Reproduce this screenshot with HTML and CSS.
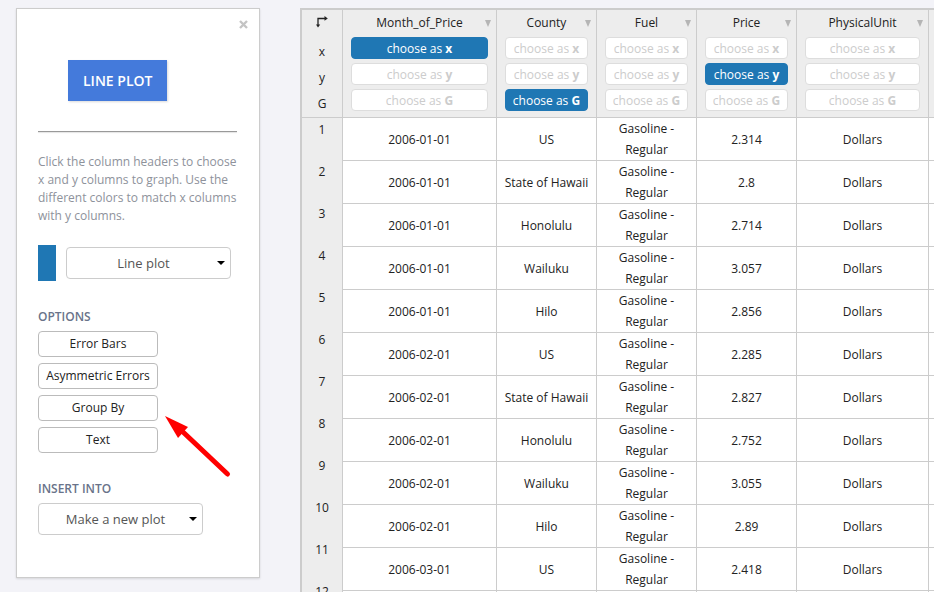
FILE: index.html
```html
<!DOCTYPE html>
<html lang="en">
<head>
<meta charset="utf-8">
<title>Line plot</title>
<link rel="stylesheet" href="styles.css">
</head>
<body>
<main class="workspace">
  <aside class="panel">
    <button class="close" type="button" aria-label="Close">
      <svg width="9" height="9" viewBox="0 0 9 9"><path d="M1 1 8 8M8 1 1 8" fill="none" stroke="currentColor" stroke-width="2.400"/></svg>
    </button>
    <button class="plot-button" type="button">LINE PLOT</button>
    <hr class="divider">
    <p class="hint">Click the column headers to choose x and y columns to graph. Use the different colors to match x columns with y columns.</p>
    <div class="trace">
      <span class="swatch"></span>
      <span class="picker"><select aria-label="Plot type"><option>Line plot</option></select></span>
    </div>
    <section class="group">
      <h2 class="heading">OPTIONS</h2>
      <div class="options">
        <button class="option" type="button">Error Bars</button>
        <button class="option" type="button">Asymmetric Errors</button>
        <button class="option" type="button">Group By</button>
        <button class="option" type="button">Text</button>
        <svg class="arrow" width="68" height="64" viewBox="0 0 68 64" aria-hidden="true"><path d="M18 16 62.500 58" stroke="#f00" stroke-width="5" stroke-linecap="round"/><path d="M0 0 23 11 13 22Z" fill="#f00"/></svg>
      </div>
    </section>
    <section class="group">
      <h2 class="heading"><label for="target">INSERT INTO</label></h2>
      <span class="picker"><select id="target"><option>Make a new plot</option></select></span>
    </section>
  </aside>

  <div class="sheet">
    <div class="gutter">
      <div class="axes">
        <svg class="corner" width="12" height="12" viewBox="0 0 12 12" aria-hidden="true"><path d="M2 9V2.500H9" fill="none" stroke="#222" stroke-width="1.300"/><path d="M0 8.500H4.200L2 11.500ZM8.500 0 11.800 2.500 8.500 4.800Z" fill="#222"/></svg>
        <span>x</span><span>y</span><span>G</span>
      </div>
      <ol class="numbers">
        <li>1</li><li>2</li><li>3</li><li>4</li><li>5</li><li>6</li><li>7</li><li>8</li><li>9</li><li>10</li><li>11</li><li>12</li>
      </ol>
    </div>
    <table class="grid">
      <colgroup><col class="c-date"><col class="c-data"><col class="c-data"><col class="c-data"><col class="c-unit"><col></colgroup>
      <thead>
        <tr>
          <th><div class="title">Month_of_Price<i class="caret"></i></div><div class="choices"><button class="choice on" type="button">choose as <b>x</b></button><button class="choice" type="button">choose as <b>y</b></button><button class="choice" type="button">choose as <b>G</b></button></div></th>
          <th><div class="title">County<i class="caret"></i></div><div class="choices"><button class="choice" type="button">choose as <b>x</b></button><button class="choice" type="button">choose as <b>y</b></button><button class="choice on" type="button">choose as <b>G</b></button></div></th>
          <th><div class="title">Fuel<i class="caret"></i></div><div class="choices"><button class="choice" type="button">choose as <b>x</b></button><button class="choice" type="button">choose as <b>y</b></button><button class="choice" type="button">choose as <b>G</b></button></div></th>
          <th><div class="title">Price<i class="caret"></i></div><div class="choices"><button class="choice" type="button">choose as <b>x</b></button><button class="choice on" type="button">choose as <b>y</b></button><button class="choice" type="button">choose as <b>G</b></button></div></th>
          <th><div class="title">PhysicalUnit<i class="caret"></i></div><div class="choices"><button class="choice" type="button">choose as <b>x</b></button><button class="choice" type="button">choose as <b>y</b></button><button class="choice" type="button">choose as <b>G</b></button></div></th>
          <td class="spare"></td>
        </tr>
      </thead>
      <tbody>
        <tr><td>2006-01-01</td><td>US</td><td>Gasoline - Regular</td><td>2.314</td><td>Dollars</td><td></td></tr>
        <tr><td>2006-01-01</td><td>State of Hawaii</td><td>Gasoline - Regular</td><td>2.8</td><td>Dollars</td><td></td></tr>
        <tr><td>2006-01-01</td><td>Honolulu</td><td>Gasoline - Regular</td><td>2.714</td><td>Dollars</td><td></td></tr>
        <tr><td>2006-01-01</td><td>Wailuku</td><td>Gasoline - Regular</td><td>3.057</td><td>Dollars</td><td></td></tr>
        <tr><td>2006-01-01</td><td>Hilo</td><td>Gasoline - Regular</td><td>2.856</td><td>Dollars</td><td></td></tr>
        <tr><td>2006-02-01</td><td>US</td><td>Gasoline - Regular</td><td>2.285</td><td>Dollars</td><td></td></tr>
        <tr><td>2006-02-01</td><td>State of Hawaii</td><td>Gasoline - Regular</td><td>2.827</td><td>Dollars</td><td></td></tr>
        <tr><td>2006-02-01</td><td>Honolulu</td><td>Gasoline - Regular</td><td>2.752</td><td>Dollars</td><td></td></tr>
        <tr><td>2006-02-01</td><td>Wailuku</td><td>Gasoline - Regular</td><td>3.055</td><td>Dollars</td><td></td></tr>
        <tr><td>2006-02-01</td><td>Hilo</td><td>Gasoline - Regular</td><td>2.89</td><td>Dollars</td><td></td></tr>
        <tr><td>2006-03-01</td><td>US</td><td>Gasoline - Regular</td><td>2.418</td><td>Dollars</td><td></td></tr>
        <tr><td></td><td></td><td></td><td></td><td></td><td></td></tr>
      </tbody>
    </table>
  </div>
</main>
</body>
</html>
```
FILE: styles.css
```css
* {
  box-sizing: border-box;
}

body {
  margin: 0;
  height: 100vh;
  overflow: hidden;
  background: #f3f3f8;
  color: #222;
  font: 12px/21px "Open Sans", sans-serif;
}

button,
select {
  margin: 0;
  padding: 0;
  font: inherit;
  color: inherit;
}

.workspace {
  display: flex;
  align-items: flex-start;
  gap: 40px;
  padding: 8px 0 0 16px;
}

/* Side panel */
.panel {
  position: relative;
  flex: 0 0 244px;
  padding: 51px 21px 42px;
  background: #fff;
  border: 1px solid #ccc;
  box-shadow: 0 1px 2px rgba(0, 0, 0, 0.12);
}

.close {
  position: absolute;
  top: 11px;
  right: 11px;
  display: flex;
  border: 0;
  background: none;
  color: #c4c4c4;
}

.plot-button {
  display: block;
  height: 41px;
  margin-left: 30px;
  padding: 0 15px;
  border: 0;
  background: #447adb;
  box-shadow: 1px 1px 2px rgba(0, 0, 0, 0.15);
  color: #fff;
  font-size: 14px;
  font-weight: 600;
}

.divider {
  height: 1px;
  margin: 30px 1px 21px 0;
  border: 0;
  background: #999;
  box-shadow: 0 1px 1px rgba(0, 0, 0, 0.12);
}

.hint {
  margin: 0 0 20px;
  color: #8e929b;
  line-height: 18px;
}

.trace {
  display: flex;
  align-items: center;
  gap: 10px;
}

.swatch {
  width: 18px;
  height: 36px;
  background: #1f77b4;
}

.picker {
  position: relative;
  display: block;
  width: 165px;
}

.picker select {
  display: block;
  width: 100%;
  height: 32px;
  padding-right: 10px;
  appearance: none;
  border: 1px solid #ccc;
  border-radius: 4px;
  background: #fff;
  color: #555;
  font-size: 13px;
  text-align-last: center;
}

.picker::after {
  content: "";
  position: absolute;
  top: 14px;
  right: 6px;
  border: 4px solid transparent;
  border-top-color: #000;
  border-bottom: 0;
}

.group {
  margin-top: 25px;
}

.heading {
  margin: 0 0 4px;
  color: #69738a;
  font-size: 12px;
  font-weight: 600;
  line-height: 21px;
}

.options {
  position: relative;
  display: flex;
  flex-direction: column;
  gap: 6px;
  width: 120px;
}

.option {
  height: 26px;
  padding-bottom: 2px;
  border: 1px solid #bbb;
  border-radius: 4px;
  background: #fff;
  white-space: nowrap;
}

.arrow {
  position: absolute;
  top: 85px;
  left: 127px;
}

/* Data sheet */
.sheet {
  display: flex;
  align-items: flex-start;
  flex: 1;
  min-width: 0;
  border: 2px solid #ccc;
  border-right: 0;
}

.gutter {
  flex: 0 0 41px;
  background: #ededed;
  border-right: 1px solid #ccc;
  text-align: center;
}

.axes {
  display: flex;
  flex-direction: column;
  align-items: center;
  gap: 5px;
  height: 108px;
  padding-top: 6px;
  border-bottom: 1px solid #ccc;
}

.corner {
  margin-bottom: 8px;
}

.numbers {
  margin: 0;
  padding: 1px 0 0;
  list-style: none;
}

.numbers li {
  height: 42px;
}

.grid {
  flex: 1;
  width: 100%;
  min-width: 0;
  table-layout: fixed;
  border-collapse: separate;
  border-spacing: 0;
  text-align: center;
}

.c-date {
  width: 154px;
}

.c-data {
  width: 100px;
}

.c-unit {
  width: 132px;
}

th,
td {
  height: 43px;
  padding: 0 7px;
  border-right: 1px solid #ccc;
  border-bottom: 1px solid #ccc;
  background: #fff;
}

tr > :last-child {
  padding: 0;
  border-right: 0;
}

th,
.spare {
  position: relative;
  height: 108px;
  padding: 0 8px 6px;
  background: #ededed;
  font-weight: 400;
}

.title {
  padding: 2px 0 4px;
}

.caret {
  position: absolute;
  top: 10px;
  right: 5px;
  border: 3px solid transparent;
  border-top: 7px solid #b5b5b5;
  border-bottom: 0;
}

.choices {
  display: flex;
  flex-direction: column;
  gap: 4px;
}

.choice {
  height: 22px;
  padding-top: 2px;
  border: 1px solid #ddd;
  border-radius: 4px;
  background: #fff;
  color: #ccc;
  line-height: 18px;
  white-space: nowrap;
}

.choice.on {
  border-color: #1f77b4;
  background: #1f77b4;
  color: #fff;
}
```
